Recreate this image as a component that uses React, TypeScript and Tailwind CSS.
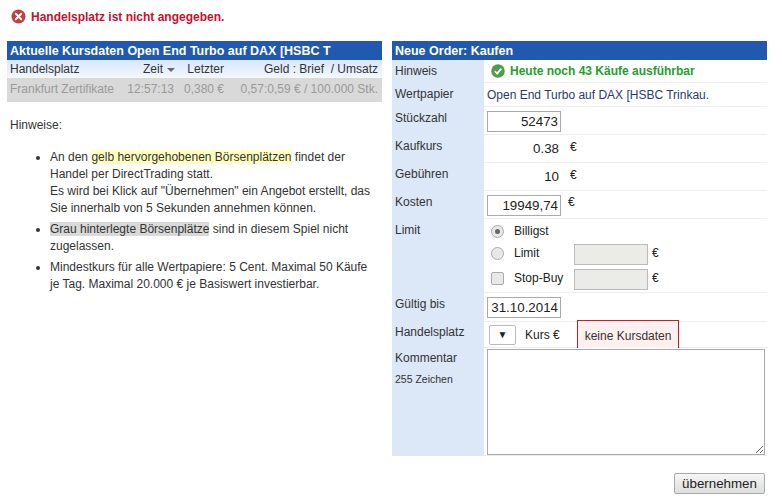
const FONT = 'font-["Liberation_Sans",Arial,sans-serif]';

function ErrorIcon() {
  return (
    <svg width="15" height="15" viewBox="0 0 15 15" className="shrink-0">
      <circle cx="7.5" cy="7.5" r="7" fill="#c0403f" />
      <path d="M4.8 4.8l5.4 5.4M10.2 4.8l-5.4 5.4" stroke="#fff" strokeWidth="2" strokeLinecap="round" />
    </svg>
  );
}

function OkIcon() {
  return (
    <svg width="14" height="14" viewBox="0 0 14 14" className="shrink-0">
      <circle cx="7" cy="7" r="6.8" fill="#4f9d4a" />
      <path d="M3.8 7.2l2.3 2.4 4.2-5" stroke="#fff" strokeWidth="1.8" fill="none" />
    </svg>
  );
}

function Row({
  label,
  height,
  children,
  sub,
  labelPad = 'pt-[4px]',
}: {
  label: string;
  height: string;
  children: React.ReactNode;
  sub?: string;
  labelPad?: string;
}) {
  return (
    <div className={`flex ${height}`}>
      <div className={`w-[92px] shrink-0 bg-[#dce7f8] pl-[3px] ${labelPad} text-[#333]`}>
        <div>{label}</div>
        {sub && <div className="mt-[8px] text-[10.5px] leading-[13px]">{sub}</div>}
      </div>
      <div className="flex-1 border-b border-[#eee] pl-[3px]">{children}</div>
    </div>
  );
}

function TextBox({ value }: { value: string }) {
  return (
    <input
      readOnly
      value={value}
      className="h-[21px] w-[74px] border border-[#aaa] bg-white px-[2px] text-right text-[13.33px] text-[#222] outline-none"
    />
  );
}

export default function App() {
  return (
    <div className={`${FONT} h-[502px] w-[778px] overflow-hidden bg-white text-[12px] leading-[14px] text-[#333]`}>
      <div className="flex items-center gap-[5px] pl-[11px] pt-[9px] font-bold text-[#c8102e]">
        <ErrorIcon />
        <span>Handelsplatz ist nicht angegeben.</span>
      </div>

      <div className="mt-[17px] flex gap-[10px] pl-[7px]">
        {/* linke Spalte */}
        <div className="w-[375px] shrink-0">
          <div className="flex h-[19px] items-center bg-[#2159ae] pl-[3px] text-[12.5px] font-bold text-white">
            Aktuelle Kursdaten Open End Turbo auf DAX [HSBC T
          </div>
          <div className="flex h-[18px] items-center bg-gradient-to-b from-[#d9e6fa] to-[#f4f8fe] pl-[3px] pr-[4px]">
            <span className="w-[109px]">Handelsplatz</span>
            <span className="flex w-[56px] items-center justify-end gap-[4px]">
              Zeit
              <span className="mt-[2px] h-0 w-0 border-x-[4px] border-t-[4px] border-x-transparent border-t-[#667]" />
            </span>
            <span className="w-[49px] text-right">Letzter</span>
            <span className="flex-1 text-right">Geld : Brief&nbsp; / Umsatz</span>
          </div>
          <div className="flex h-[24px] items-center bg-[#d9d9d9] pb-[2px] pl-[3px] pr-[4px] text-[#999]">
            <span className="w-[109px] whitespace-nowrap">Frankfurt Zertifikate</span>
            <span className="w-[55px] text-right">12:57:13</span>
            <span className="w-[50px] text-right">0,380 €</span>
            <span className="flex-1 text-right">0,57:0,59 € / 100.000 Stk.</span>
          </div>

          <p className="mt-[16px] pl-[3px]">Hinweise:</p>

          <ul className="mt-[17px] list-disc pl-[43px] pr-[4px] leading-[17px]">
            <li>
              An den <span className="bg-[#ffffc0]">gelb hervorgehobenen Börsenplätzen</span> findet der Handel per
              DirectTrading statt.
              <br />
              Es wird bei Klick auf "Übernehmen" ein Angebot erstellt, das Sie innerhalb von 5 Sekunden annehmen können.
            </li>
            <li className="mt-[4px]">
              <span className="bg-[#d9d9d9]">Grau hinterlegte Börsenplätze</span> sind in diesem Spiel nicht zugelassen.
            </li>
            <li className="mt-[4px]">
              Mindestkurs für alle Wertpapiere: 5 Cent. Maximal 50 Käufe je Tag. Maximal 20.000 € je Basiswert
              investierbar.
            </li>
          </ul>
        </div>

        {/* rechte Spalte */}
        <div className="w-[375px] shrink-0">
          <div className="flex h-[19px] items-center bg-[#2159ae] pl-[3px] text-[12.5px] font-bold text-white">
            Neue Order: Kaufen
          </div>
          <Row label="Hinweis" height="h-[23px]">
            <div className="flex h-full items-center gap-[5px] pl-[4px] font-bold text-[#1fa02c]">
              <OkIcon />
              <span>Heute noch 43 Käufe ausführbar</span>
            </div>
          </Row>
          <Row label="Wertpapier" height="h-[24px]">
            <div className="pt-[5px] text-[#2b3a6b]">Open End Turbo auf DAX [HSBC Trinkau.</div>
          </Row>
          <Row label="Stückzahl" height="h-[28px]">
            <div className="pt-[4px]">
              <TextBox value="52473" />
            </div>
          </Row>
          <Row label="Kaufkurs" height="h-[28px]">
            <div className="flex pt-[5px]">
              <span className="w-[74px] pr-[2px] pt-[1px] text-right text-[13.33px] leading-[16px] text-[#222]">0.38</span>
              <span className="ml-[9px] text-[#222]">€</span>
            </div>
          </Row>
          <Row label="Gebühren" height="h-[28px]">
            <div className="flex pt-[5px]">
              <span className="w-[74px] pr-[2px] pt-[1px] text-right text-[13.33px] leading-[16px] text-[#222]">10</span>
              <span className="ml-[9px] text-[#222]">€</span>
            </div>
          </Row>
          <Row label="Kosten" height="h-[28px]">
            <div className="flex pt-[4px]">
              <TextBox value="19949,74" />
              <span className="ml-[7px] text-[#222]">€</span>
            </div>
          </Row>
          <Row label="Limit" height="h-[74px]">
            <div className="grid grid-cols-[24px_60px_74px_auto] items-center pl-[3px] pt-[2px] text-[#222]">
              <span className="ml-[1px] flex h-[13px] w-[13px] items-center justify-center rounded-full border border-[#aaa] bg-[#e8e8e8]">
                <span className="h-[5px] w-[5px] rounded-full bg-[#666]" />
              </span>
              <span className="col-span-3 h-[20px] leading-[20px]">Billigst</span>
              <span className="ml-[1px] h-[13px] w-[13px] rounded-full border border-[#aaa] bg-[#e8e8e8]" />
              <span>Limit</span>
              <span className="mt-[3px] h-[21px] border border-[#bbb] bg-[#ebebe8]" />
              <span className="ml-[4px]">€</span>
              <span className="ml-[1px] mt-[2px] h-[13px] w-[13px] rounded-[2px] border border-[#aaa] bg-[#e8e8e8]" />
              <span className="mt-[1px] whitespace-nowrap">Stop-Buy</span>
              <span className="mt-[4px] h-[21px] border border-[#bbb] bg-[#ebebe8]" />
              <span className="ml-[4px] mt-[1px]">€</span>
            </div>
          </Row>
          <Row label="Gültig bis" height="h-[29px]">
            <div className="pt-[4px]">
              <TextBox value="31.10.2014" />
            </div>
          </Row>
          <Row label="Handelsplatz" height="h-[26px]" labelPad="pt-[3px]">
            <div className="flex text-[#222]">
              <span className="ml-[2px] mt-[3px] flex h-[20px] w-[27px] items-center justify-center rounded-[2px] border border-[#bbb] text-[10px]">
                ▼
              </span>
              <span className="ml-[9px] mt-[6px]">Kurs €</span>
              <span className="ml-[17px] mt-[-2px] h-[28px] w-[102px] border-x border-t border-[#c41e2a] bg-[#fdf0ee] pl-[7px] pt-[8px] text-[#333]">
                keine Kursdaten
              </span>
            </div>
          </Row>
          <Row label="Kommentar" sub="255 Zeichen" height="h-[108px]" labelPad="pt-[3px]">
            <textarea
              readOnly
              className="mt-[1px] block h-[106px] w-[278px] border border-[#aaa] bg-white outline-none"
            />
          </Row>
          <div className="mt-[17px] flex justify-end pr-[2px]">
            <button className="h-[21px] w-[91px] rounded-[2px] border border-[#aaa] bg-gradient-to-b from-[#f6f6f6] to-[#dddddd] text-[13.33px] leading-[16px] text-[#222]">
              übernehmen
            </button>
          </div>
        </div>
      </div>
    </div>
  );
}
